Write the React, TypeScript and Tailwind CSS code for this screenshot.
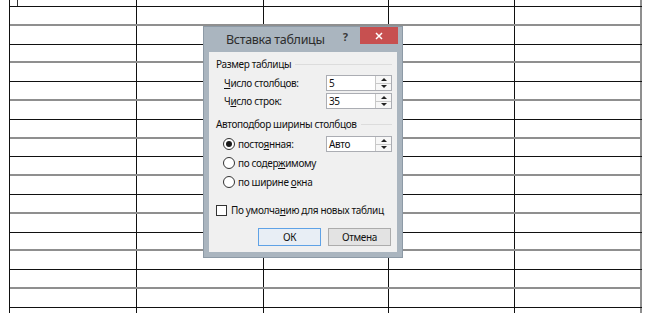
import React from "react";

type Kind = "top" | "gray" | "black" | "end";

const cellClasses = [
  "w-[127px] shrink-0 border-r border-r-[#111]",
  "w-[127px] shrink-0 border-r border-r-[#111]",
  "w-[125px] shrink-0 border-r border-r-[#111]",
  "w-[126px] shrink-0 border-r border-r-[#111]",
  "w-[127px] shrink-0 border-r-2 border-r-[#8f8f8f]",
];

function Row({ kind }: { kind: Kind }) {
  const rowCls =
    kind === "top"
      ? "h-[7px] border-b border-b-[#111]"
      : kind === "gray"
      ? "h-[18.8px] border-b-2 border-b-[#8f8f8f]"
      : kind === "black"
      ? "h-[18.8px] border-b border-b-[#111]"
      : "h-[8px]";
  return (
    <div className={"flex " + rowCls}>
      {cellClasses.map((c, i) => (
        <div key={i} className={c}>
          {kind === "top" && i === 0 ? <div className="ml-[7px] w-px h-full bg-[#333]" /> : null}
        </div>
      ))}
    </div>
  );
}

function Spinner() {
  return (
    <div className="w-[16px] h-full border-l border-l-[#c8c8c8] bg-[#f7f7f7] flex flex-col">
      <div className="flex-1 flex items-center justify-center border-b border-b-[#c8c8c8]">
        <div className="w-0 h-0 border-x-[3px] border-x-transparent border-b-[3px] border-b-[#222]" />
      </div>
      <div className="flex-1 flex items-center justify-center">
        <div className="w-0 h-0 border-x-[3px] border-x-transparent border-t-[3px] border-t-[#222]" />
      </div>
    </div>
  );
}

function NumInput({ value }: { value: string }) {
  return (
    <div className="w-[66px] h-full shrink-0 border border-[#abadb3] bg-white flex">
      <div className="flex-1 pl-[2px] flex items-center leading-none">{value}</div>
      <Spinner />
    </div>
  );
}

function Radio({ checked }: { checked?: boolean }) {
  return (
    <div className="w-[12px] h-[12px] shrink-0 rounded-full border border-[#333] bg-white flex items-center justify-center">
      {checked ? <div className="w-[6px] h-[6px] rounded-full bg-[#1a1a1a]" /> : null}
    </div>
  );
}

export default function App() {
  const rows: Kind[] = ["top"];
  for (let i = 0; i < 16; i++) rows.push(i % 2 === 0 ? "gray" : "black");
  rows.push("end");

  return (
    <div className="relative w-[650px] h-[313px] overflow-hidden bg-white font-[family-name:'Noto_Sans',sans-serif] whitespace-nowrap">
      <div className="ml-[9px] w-[633px] border-l border-l-[#111]">
        {rows.map((k, i) => (
          <Row key={i} kind={k} />
        ))}
      </div>

      <div className="absolute left-[203px] top-[26px] w-[200px] h-[232px] border border-[#8d9aa6] bg-[#aab5bf] flex flex-col">
        <div className="h-[25px] shrink-0 flex items-start">
          <div className="pl-[22px] pt-[3px] text-[12.5px] tracking-[-0.3px] leading-[20px] text-[#2d2d2d] shrink-0">Вставка таблицы</div>
          <div className="ml-auto pt-[2px] text-[11px] leading-[16px] font-bold text-[#3a3a3a]">?</div>
          <div className="ml-[12px] mr-[4px] w-[38px] h-[17px] shrink-0 bg-[#c75050] flex items-center justify-center">
            <svg width="8" height="8" viewBox="0 0 8 8">
              <path d="M1 1 L7 7 M7 1 L1 7" stroke="#fff" strokeWidth="1.5" />
            </svg>
          </div>
        </div>

        <div className="mx-[5px] h-[200px] bg-[#f0f0f0] flex flex-col text-[10px] tracking-[-0.35px] leading-[16px] text-[#111]">
          <div className="mt-[4px] h-[16px] flex items-center">
            <span className="pl-[7px]">Размер таблицы</span>
            <div className="flex-1 ml-[4px] mr-[5px] h-px bg-[#dcdcdc]" />
          </div>

          <div className="mt-[3px] h-[16px] flex items-center">
            <span className="pl-[15px] w-[117px] shrink-0">
              <span className="underline">Ч</span>исло столбцов:
            </span>
            <NumInput value="5" />
          </div>

          <div className="mt-[2px] h-[16px] flex items-center">
            <span className="pl-[15px] w-[117px] shrink-0">
              Ч<span className="underline">и</span>сло строк:
            </span>
            <NumInput value="35" />
          </div>

          <div className="mt-[7px] h-[16px] flex items-center">
            <span className="pl-[7px]">Автоподбор ширины столбцов</span>
            <div className="flex-1 ml-[4px] mr-[5px] h-px bg-[#dcdcdc]" />
          </div>

          <div className="mt-[4px] h-[16px] flex items-center">
            <div className="pl-[14px] w-[117px] shrink-0 flex items-center">
              <Radio checked />
              <span className="ml-[3px]">
                посто<span className="underline">я</span>нная:
              </span>
            </div>
            <NumInput value="Авто" />
          </div>

          <div className="mt-[3px] h-[16px] flex items-center pl-[14px]">
            <Radio />
            <span className="ml-[3px]">
              по содер<span className="underline">ж</span>имому
            </span>
          </div>

          <div className="mt-[3px] h-[16px] flex items-center pl-[14px]">
            <Radio />
            <span className="ml-[3px]">
              по ширине <span className="underline">о</span>кна
            </span>
          </div>

          <div className="mt-[12px] h-[16px] flex items-center pl-[7px]">
            <div className="w-[11px] h-[11px] shrink-0 border border-[#333] bg-white" />
            <span className="ml-[4px]">
              По умолча<span className="underline">н</span>ию для новых таблиц
            </span>
          </div>

          <div className="mt-[10px] h-[18px] flex justify-end gap-[7px] pr-[6px]">
            <div className="w-[63px] h-full border border-[#5fa2e6] bg-[#e8eef5] flex items-center justify-center">
              ОК
            </div>
            <div className="w-[63px] h-full border border-[#acacac] bg-[#e3e3e3] flex items-center justify-center">
              Отмена
            </div>
          </div>
        </div>
      </div>
    </div>
  );
}
